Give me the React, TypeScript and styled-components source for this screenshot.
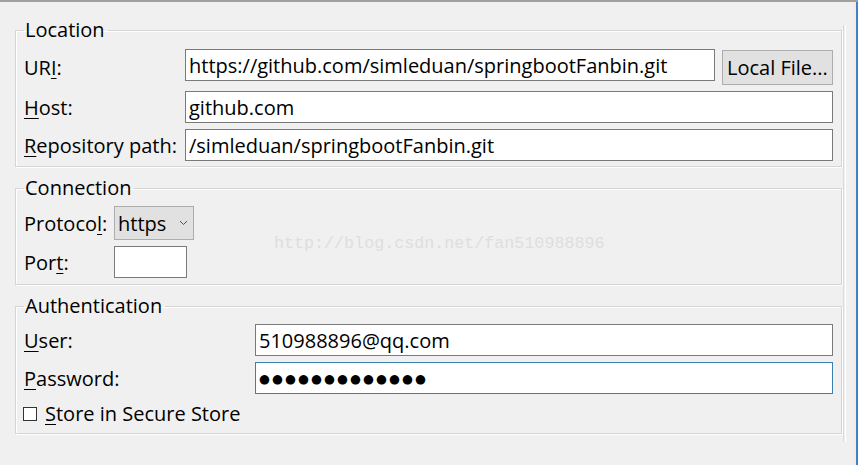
import React from 'react';
import styled, { createGlobalStyle } from 'styled-components';

const GlobalStyle = createGlobalStyle`
  html, body {
    margin: 0;
    padding: 0;
    background: #f0f0f0;
  }
  body {
    font-family: 'Open Sans', 'Noto Sans', sans-serif;
    font-size: 20px;
    color: #000;
  }
  * {
    box-sizing: border-box;
  }
`;

const Window = styled.div`
  position: relative;
  width: 858px;
  height: 465px;
  display: flex;
  border-top: 2px solid #a0a0a0;
  background: #f0f0f0;
  overflow: hidden;
`;

const Body = styled.div`
  flex: 1;
  padding: 15px 1px 0 15px;
  display: flex;
  flex-direction: column;
  gap: 8px;
`;

const Edge = styled.div`
  flex: none;
  width: 15px;
  padding: 23px 0;
  background: linear-gradient(
    to right,
    transparent 0 10px,
    #fbe9df 10px 13px,
    #3b84c9 13px 15px
  );
`;

const Rail = styled.div`
  width: 3px;
  height: 100%;
  border-left: 1px solid #dadada;
  border-right: 1px solid #fff;
`;

const Group = styled.fieldset<{ $padTop: number; $padBottom: number }>`
  margin: 0;
  min-inline-size: 0;
  padding: ${(p) => p.$padTop}px 8px ${(p) => p.$padBottom}px 8px;
  border: 1px solid #d5d5d5;
  box-shadow: inset 1px 1px 0 #fff, 1px 1px 0 #fff;
`;

const Legend = styled.legend`
  padding: 0 3px 0 1px;
  line-height: 26px;
  font-size: 20px;
`;

const Form = styled.div<{ $labelWidth: number }>`
  display: grid;
  grid-template-columns: ${(p) => p.$labelWidth}px 1fr;
  row-gap: 6px;
  align-items: center;
`;

const Label = styled.label`
  white-space: nowrap;
  line-height: 27px;
`;

const Key = styled.span`
  text-decoration: underline;
  text-decoration-thickness: 1px;
  text-underline-offset: 3px;
`;

const Field = styled.input<{ $focused?: boolean; $width?: number }>`
  display: block;
  width: ${(p) => (p.$width ? `${p.$width}px` : '100%')};
  height: 32px;
  margin: 0;
  padding: 0 3px;
  border: 1px solid ${(p) => (p.$focused ? '#3c7fb1' : '#7a7a7a')};
  background: #fff;
  font: inherit;
  color: #000;
  outline: none;
`;

const Dots = styled(Field)`
  font-family: 'DejaVu Sans', sans-serif;
  font-size: 12.5px;
  letter-spacing: 2.1px;
`;

const Pair = styled.div`
  display: flex;
  align-items: flex-start;
  gap: 7px;
`;

const PushButton = styled.button`
  flex: none;
  width: 111px;
  height: 35px;
  margin: 1px 0 0;
  padding: 0 0 0 4px;
  text-align: left;
  background: #e1e1e1;
  border: 1px solid #adadad;
  font: inherit;
  color: #000;
`;

const Combo = styled.div`
  width: 80px;
  height: 34px;
  display: flex;
  align-items: center;
  justify-content: space-between;
  padding: 0 5px 0 3px;
  background: #e1e1e1;
  border: 1px solid #adadad;
`;

const CheckRow = styled.label`
  grid-column: 1 / -1;
  display: flex;
  align-items: center;
  gap: 8px;
  line-height: 27px;
  margin-left: -1px;
`;

const Box = styled.span`
  width: 14px;
  height: 14px;
  border: 1px solid #333;
  background: #fff;
`;

const Watermark = styled.div`
  position: absolute;
  left: 274px;
  top: 232px;
  font-family: 'Liberation Mono', monospace;
  font-size: 16.7px;
  line-height: 20px;
  color: #dedede;
  pointer-events: none;
`;

function Chevron() {
  return (
    <svg width="9" height="6" viewBox="0 0 9 6">
      <path d="M1 1 L4.5 4.5 L8 1" fill="none" stroke="#555" strokeWidth="1" />
    </svg>
  );
}

export default function App() {
  return (
    <>
      <GlobalStyle />
      <Window>
        <Body>
          <Group $padTop={6} $padBottom={5}>
            <Legend>Location</Legend>
            <Form $labelWidth={161}>
              <Label>
                UR<Key>I</Key>:
              </Label>
              <Pair>
                <Field readOnly value="https://github.com/simleduan/springbootFanbin.git" />
                <PushButton>Local File...</PushButton>
              </Pair>
              <Label>
                <Key>H</Key>ost:
              </Label>
              <Field readOnly value="github.com" />
              <Label>
                <Key>R</Key>epository path:
              </Label>
              <Field readOnly value="/simleduan/springbootFanbin.git" />
            </Form>
          </Group>

          <Group $padTop={5} $padBottom={6}>
            <Legend>Connection</Legend>
            <Form $labelWidth={90}>
              <Label>
                Protoco<Key>l</Key>:
              </Label>
              <Combo>
                <span>https</span>
                <Chevron />
              </Combo>
              <Label>
                Por<Key>t</Key>:
              </Label>
              <Field readOnly value="" $width={73} />
            </Form>
          </Group>

          <Group $padTop={5} $padBottom={6}>
            <Legend>Authentication</Legend>
            <Form $labelWidth={231}>
              <Label>
                <Key>U</Key>ser:
              </Label>
              <Field readOnly value="510988896@qq.com" />
              <Label>
                <Key>P</Key>assword:
              </Label>
              <Dots readOnly $focused value="●●●●●●●●●●●●●" />
              <CheckRow>
                <Box />
                <span>
                  <Key>S</Key>tore in Secure Store
                </span>
              </CheckRow>
            </Form>
          </Group>
        </Body>
        <Edge>
          <Rail />
        </Edge>
        <Watermark>http://blog.csdn.net/fan510988896</Watermark>
      </Window>
    </>
  );
}
